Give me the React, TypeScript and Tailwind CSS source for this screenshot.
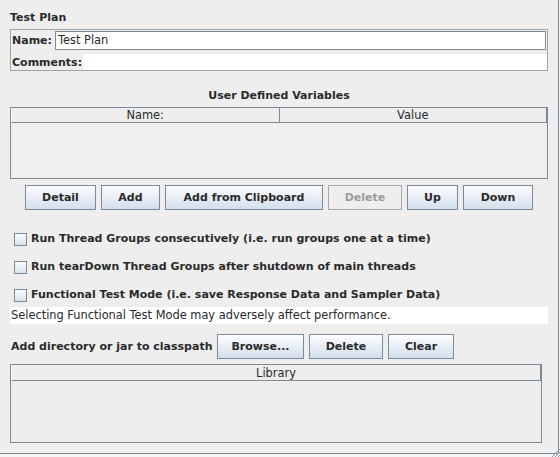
import React from "react";

const Btn = ({ label, w, disabled }: { label: string; w: string; disabled?: boolean }) => (
  <div
    className={
      disabled
        ? `${w} h-[25px] shrink-0 flex items-center justify-center border border-[#a9a9a9] bg-[#eeeeee] text-[#9a9a9a] font-bold`
        : `${w} h-[25px] shrink-0 flex items-center justify-center border border-[#7a8a99] bg-gradient-to-b from-[#fdfdfe] to-[#d2dfec] text-[#2a2a2a] font-bold`
    }
  >
    {label}
  </div>
);

const Check = ({ label }: { label: string }) => (
  <div className="h-[13px] flex items-center">
    <div className="ml-[4px] w-[13px] h-[13px] border border-[#7a8a99] bg-gradient-to-b from-[#fbfcfe] to-[#d6e2ee] shrink-0" />
    <span className="ml-[4px] -mt-[3px] font-bold text-[#2a2a2a] whitespace-nowrap leading-[13px]">{label}</span>
  </div>
);

export default function App() {
  return (
    <div className="relative w-[560px] h-[457px] bg-[#f4f4f4] overflow-hidden font-['DejaVu_Sans',sans-serif] text-[11px] leading-[13px] text-[#2a2a2a]">
      <div className="w-[559px] h-[454px] bg-[#eeeeee] border-r border-b border-[#7a8a99] flex flex-col pl-[10px]">
        <div className="mt-[11px] h-[13px] font-bold">Test Plan</div>

        <div className="mt-[5px] w-[538px] h-[42px] border border-[#a4a4a4] flex flex-col pt-[1px]">
          <div className="h-[19px] flex items-center pr-[1px]">
            <span className="w-[44px] pl-[1px] font-bold shrink-0">Name:</span>
            <div className="flex-1 h-[19px] border border-[#7a8a99] bg-white flex items-center pl-[2px] text-[11.4px]">Test Plan</div>
          </div>
          <div className="mt-[4px] h-[16px] flex items-center">
            <span className="w-[72px] pl-[1px] font-bold shrink-0">Comments:</span>
            <div className="flex-1 h-[16px] bg-white" />
          </div>
        </div>

        <div className="mt-[18px] w-[538px] h-[13px] font-bold text-center">User Defined Variables</div>

        <div className="mt-[5px] w-[538px] h-[72px] border border-[#7a8a99] bg-[#efefef] flex flex-col">
          <div className="h-[15px] flex border-b border-[#7a8a99] border-l border-l-[#ffffff] text-[11.4px]">
            <div className="flex-1 border-r border-[#7a8a99] text-center leading-[15px] bg-[#eeeeee]">Name:</div>
            <div className="flex-1 border-r border-[#7a8a99] text-center leading-[15px] bg-[#eeeeee]">Value</div>
          </div>
        </div>

        <div className="mt-[6px] w-[538px] flex justify-center gap-[5px]">
          <Btn label="Detail" w="w-[71px]" />
          <Btn label="Add" w="w-[59px]" />
          <Btn label="Add from Clipboard" w="w-[158px]" />
          <Btn label="Delete" w="w-[74px]" disabled />
          <Btn label="Up" w="w-[51px]" />
          <Btn label="Down" w="w-[70px]" />
        </div>

        <div className="mt-[23px] flex flex-col gap-[15px]">
          <Check label="Run Thread Groups consecutively (i.e. run groups one at a time)" />
          <Check label="Run tearDown Thread Groups after shutdown of main threads" />
          <Check label="Functional Test Mode (i.e. save Response Data and Sampler Data)" />
        </div>

        <div className="mt-[5px] w-[538px] h-[17px] bg-white flex items-center pl-[1px] whitespace-nowrap text-[11.4px]">
          Selecting Functional Test Mode may adversely affect performance.
        </div>

        <div className="mt-[10px] flex items-center">
          <span className="w-[207px] pl-[1px] font-bold whitespace-nowrap shrink-0">Add directory or jar to classpath</span>
          <div className="flex gap-[5px]">
            <Btn label="Browse..." w="w-[87px]" />
            <Btn label="Delete" w="w-[74px]" />
            <Btn label="Clear" w="w-[66px]" />
          </div>
        </div>

        <div className="mt-[5px] w-[532px] h-[79px] border border-[#7a8a99] bg-[#eeeeee] flex flex-col">
          <div className="h-[16px] border-b border-[#7a8a99] border-r border-l border-l-[#ffffff] text-center leading-[16px] text-[11.4px]">Library</div>
        </div>
      </div>

      <svg className="absolute right-0 bottom-0" width="9" height="9" viewBox="0 0 9 9">
        <line x1="1" y1="9" x2="9" y2="1" stroke="#8a96a2" strokeWidth="1" />
        <line x1="4" y1="9" x2="9" y2="4" stroke="#8a96a2" strokeWidth="1" />
        <line x1="7" y1="9" x2="9" y2="7" stroke="#8a96a2" strokeWidth="1" />
      </svg>
    </div>
  );
}
